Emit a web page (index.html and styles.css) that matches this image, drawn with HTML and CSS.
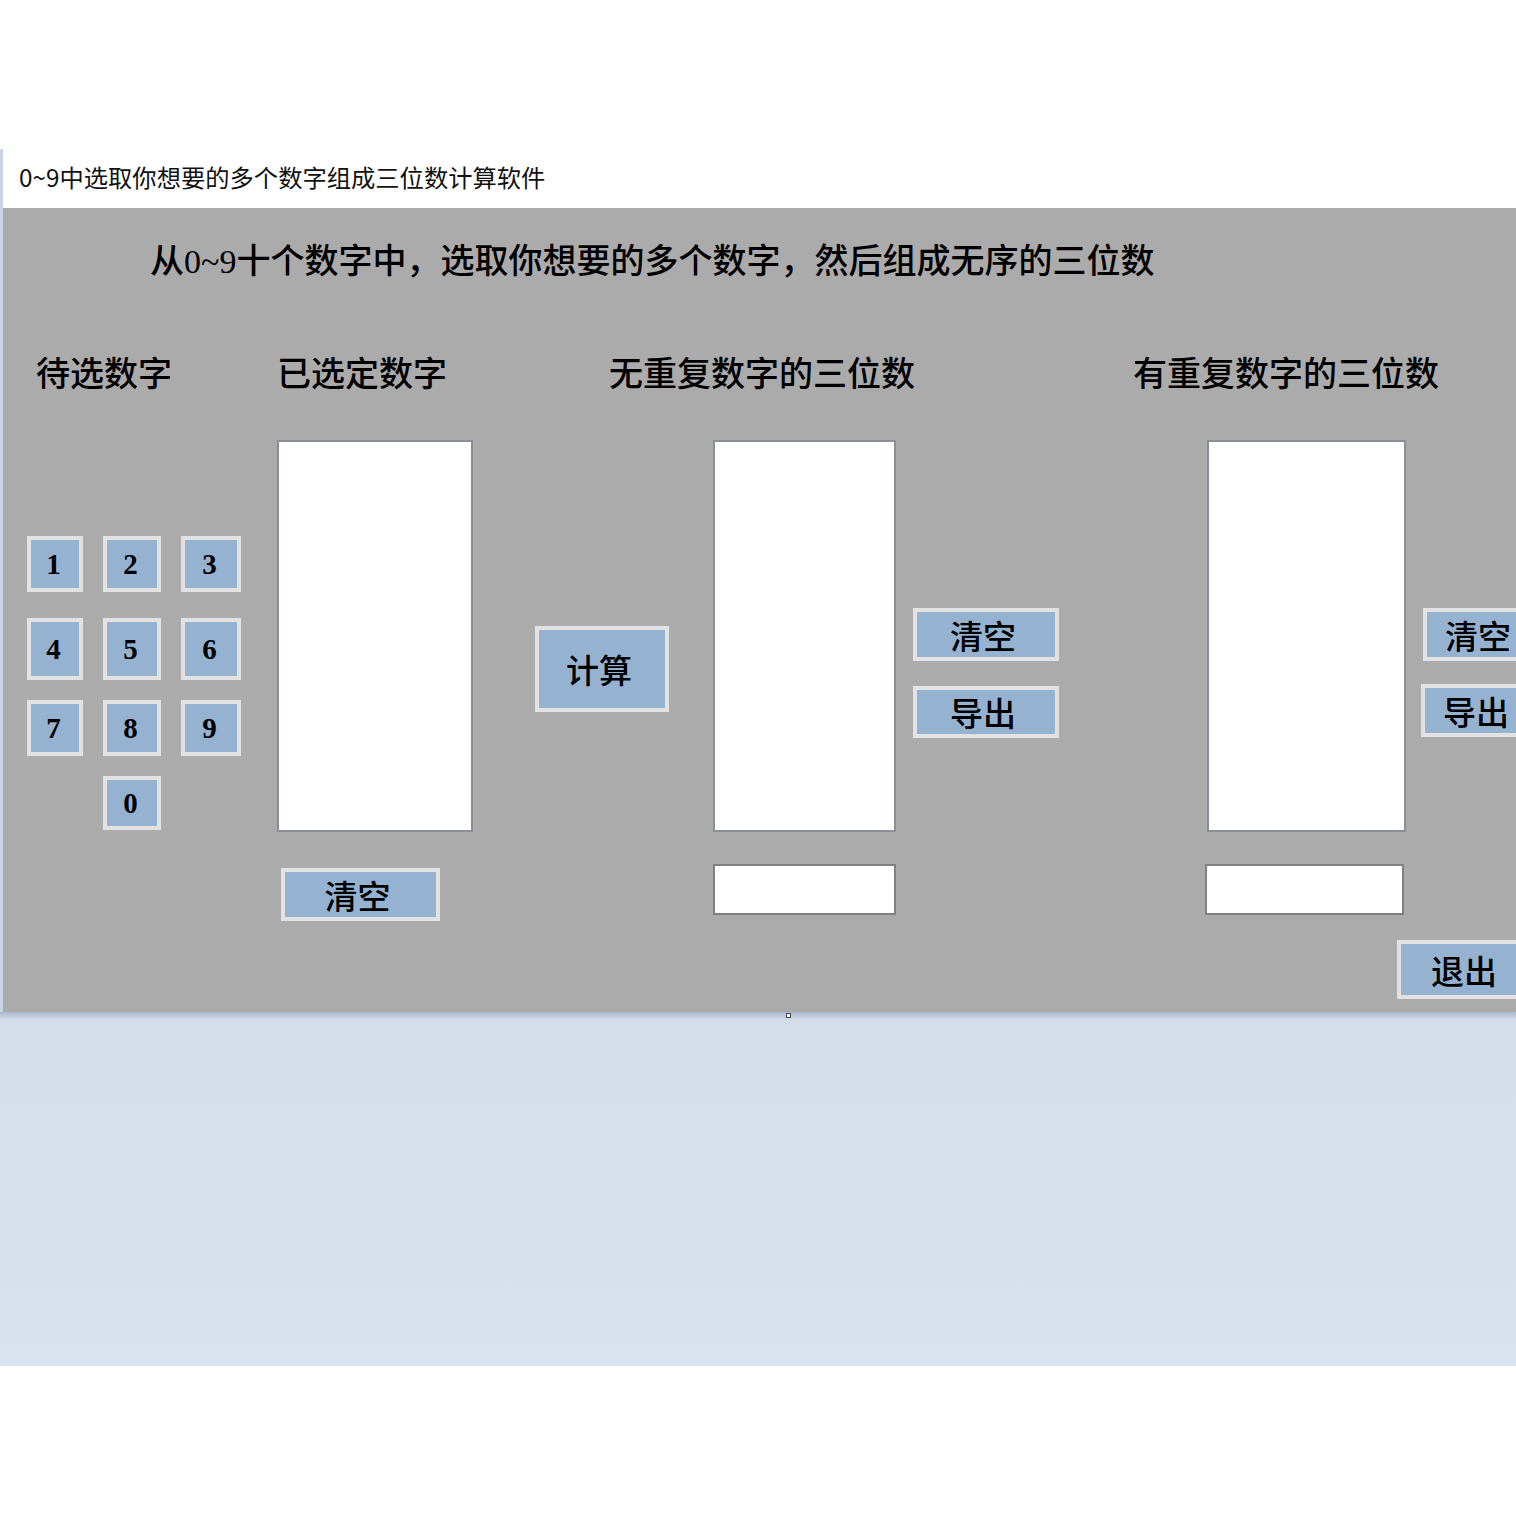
FILE: index.html
```html
<!DOCTYPE html>
<html lang="zh-CN">
<head>
<meta charset="utf-8">
<title>0~9中选取你想要的多个数字组成三位数计算软件</title>
<link rel="stylesheet" href="styles.css">
</head>
<body>
<div class="desk">
  <div class="window">
    <div class="titlebar">0~9中选取你想要的多个数字组成三位数计算软件</div>
    <div class="panel">
      <div class="headline">从0~9十个数字中，选取你想要的多个数字，然后组成无序的三位数</div>
      <div class="cols">
        <div class="col col-a">
          <div class="heading pad-a">待选数字</div>
          <div class="keypad">
            <div class="btn key r1">1</div>
            <div class="btn key r1">2</div>
            <div class="btn key r1">3</div>
            <div class="btn key">4</div>
            <div class="btn key">5</div>
            <div class="btn key">6</div>
            <div class="btn key">7</div>
            <div class="btn key">8</div>
            <div class="btn key">9</div>
            <div class="btn key zero">0</div>
          </div>
        </div>
        <div class="col col-b">
          <div class="heading">已选定数字</div>
          <div class="listbox list-b"></div>
          <div class="btn text-btn clear-b">清空</div>
        </div>
        <div class="col col-cd">
          <div class="heading pad-cd">无重复数字的三位数</div>
          <div class="body-row">
            <div class="btn text-btn calc">计算</div>
            <div class="stack stack-d">
              <div class="listbox list-d"></div>
              <div class="textbox text-d"></div>
            </div>
            <div class="side side-d">
              <div class="btn text-btn side-btn">清空</div>
              <div class="btn text-btn side-btn export-d">导出</div>
            </div>
          </div>
        </div>
        <div class="col col-e">
          <div class="heading">有重复数字的三位数</div>
          <div class="body-row">
            <div class="stack stack-e">
              <div class="listbox list-e"></div>
              <div class="textbox text-e"></div>
              <div class="btn text-btn quit">退出</div>
            </div>
            <div class="side side-e">
              <div class="btn text-btn side-btn side-e-btn">清空</div>
              <div class="btn text-btn side-btn side-e-btn export-e">导出</div>
            </div>
          </div>
        </div>
      </div>
    </div>
  </div>
  <div class="handle"></div>
</div>
</body>
</html>
```
FILE: styles.css
```css
html, body {
  margin: 0;
  padding: 0;
  background: #ffffff;
  overflow: hidden;
}

body {
  width: 1516px;
  height: 1516px;
  font-family: "Noto Sans CJK SC", sans-serif;
}

.desk {
  position: relative;
  margin-top: 149px;
  height: 1217px;
  overflow: hidden;
  background: linear-gradient(to bottom,
    #c9d4e5 0px, #c9d4e5 863px,
    #aab8ce 863px, #c4cfe0 868px, #d4deeb 871px,
    #d9e2ef 1217px);
}

.window {
  margin-left: 3px;
  width: 1640px;
}

.titlebar {
  height: 59px;
  box-sizing: border-box;
  line-height: 55px;
  padding-bottom: 4px;
  background: #ffffff;
  padding-left: 16px;
  font-size: 24.3px;
  color: #111;
  font-family: "Noto Sans CJK SC", sans-serif;
}

.panel {
  height: 804px;
  box-sizing: border-box;
  background: #ababab;
  padding-top: 34px;
  color: #000;
  font-family: "Liberation Serif", "Noto Sans CJK SC", serif;
}

.headline {
  margin-left: 147px;
  font-size: 34px;
  line-height: 40px;
  height: 40px;
  font-weight: 500;
  white-space: nowrap;
}

.cols {
  display: flex;
  align-items: flex-start;
  margin-top: 70px;
}

.col {
  flex: none;
}

.heading {
  font-size: 34px;
  line-height: 40px;
  height: 40px;
  font-weight: 500;
  white-space: nowrap;
  font-family: "Noto Sans CJK SC", sans-serif;
}

.col-a { width: 274px; }
.pad-a { padding-left: 33px; }

.col-b { width: 258px; }
.col-cd { width: 598px; }
.pad-cd { padding-left: 74px; }
.col-e { width: 500px; }

.btn {
  box-sizing: border-box;
  border: 4px solid #e2e2e2;
  background: #96b2d1;
  display: flex;
  align-items: center;
  justify-content: center;
  color: #000;
}

.keypad {
  margin-left: 24px;
  margin-top: 144px;
  display: grid;
  grid-template-columns: 56px 58px 60px;
  grid-template-rows: 62px 62px 56px 54px;
  column-gap: 20px;
  row-gap: 20px;
}

.key {
  font-family: "Liberation Serif", serif;
  font-weight: 700;
  font-size: 29px;
  padding-right: 3px;
}

.key.r1 {
  height: 56px;
  align-self: start;
}

.key.zero {
  grid-column: 2;
}

.text-btn {
  font-family: "Noto Sans CJK SC", sans-serif;
  font-weight: 500;
  font-size: 33px;
  white-space: nowrap;
}

.listbox {
  box-sizing: border-box;
  background: #ffffff;
  border: 2px solid #8a8e98;
}

.textbox {
  box-sizing: border-box;
  background: #ffffff;
  border: 2px solid #808080;
}

.list-b {
  margin-top: 48px;
  width: 196px;
  height: 392px;
}

.clear-b {
  margin-top: 36px;
  margin-left: 4px;
  width: 159px;
  height: 53px;
  padding-right: 6px;
}

.body-row {
  display: flex;
  align-items: flex-start;
}

.calc {
  flex: none;
  margin-top: 234px;
  width: 134px;
  height: 86px;
  padding-right: 6px;
}

.stack {
  flex: none;
  margin-top: 48px;
  display: flex;
  flex-direction: column;
}

.stack-d {
  margin-left: 44px;
  width: 183px;
}

.list-d {
  width: 183px;
  height: 392px;
}

.text-d {
  margin-top: 32px;
  width: 183px;
  height: 51px;
}

.side {
  flex: none;
  display: flex;
  flex-direction: column;
}

.side-d {
  margin-left: 17px;
  margin-top: 216px;
}

.side-btn {
  width: 146px;
  height: 53px;
  padding-right: 6px;
}

.export-d {
  margin-top: 25px;
  height: 52px;
}

.stack-e {
  margin-left: 74px;
  width: 199px;
}

.list-e {
  width: 199px;
  height: 392px;
}

.text-e {
  margin-left: -2px;
  margin-top: 32px;
  width: 199px;
  height: 51px;
}

.quit {
  margin-top: 25px;
  margin-left: 190px;
  width: 140px;
  height: 59px;
  padding-right: 6px;
}

.side-e {
  margin-left: 17px;
  margin-top: 216px;
}

.side-e-btn {
  width: 110px;
  justify-content: flex-start;
  padding-left: 18px;
  padding-right: 0;
}

.export-e {
  margin-left: -2px;
  margin-top: 23px;
}

.handle {
  position: absolute;
  left: 786px;
  top: 864px;
  width: 5px;
  height: 5px;
  box-sizing: border-box;
  border: 1px solid #444;
  background: #ffffff;
}
```
